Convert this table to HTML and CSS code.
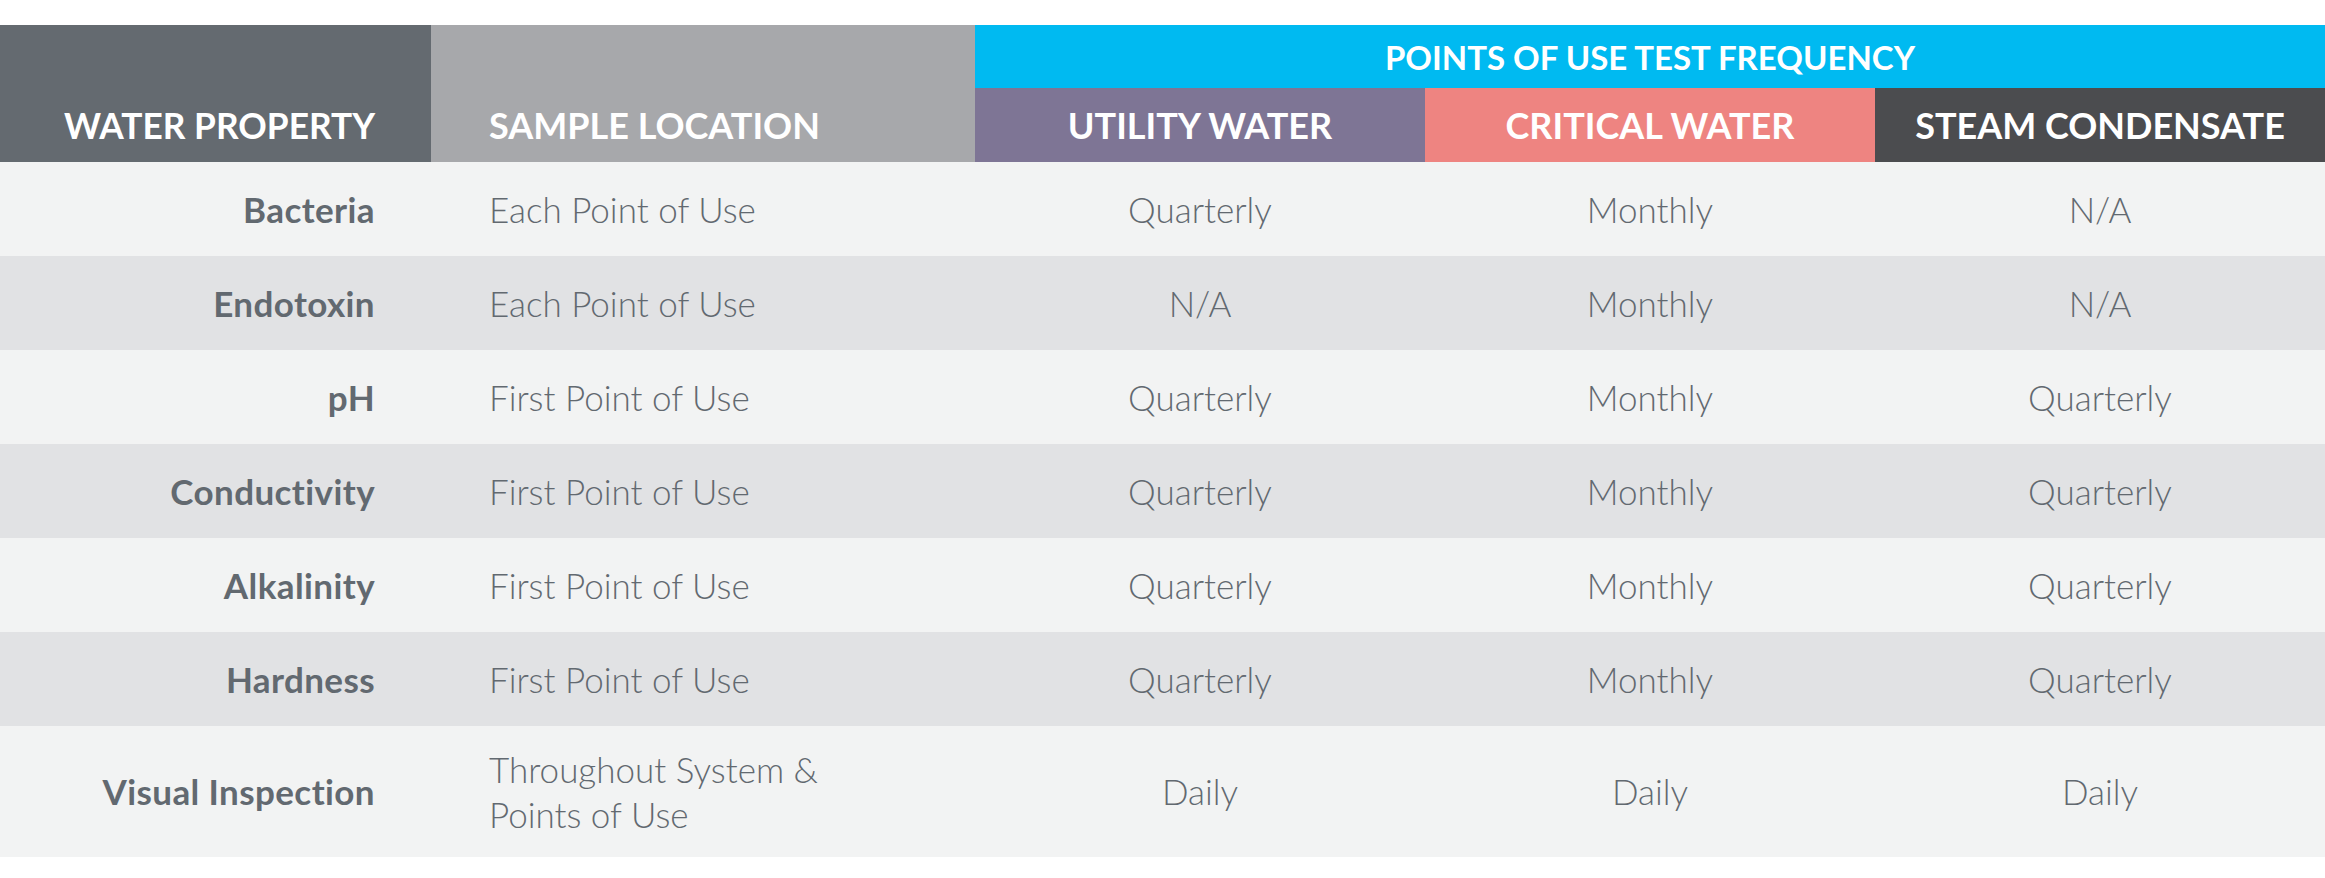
FILE: index.html
```html
<!DOCTYPE html>
<html lang="en">
<head>
<meta charset="utf-8">
<title>Points of Use Test Frequency</title>
<link rel="stylesheet" href="styles.css">
</head>
<body>
<div class="table">
  <div class="hcell h-prop"><span>WATER PROPERTY</span></div>
  <div class="hcell h-loc"><span>SAMPLE LOCATION</span></div>
  <div class="hcell h-group">POINTS OF USE TEST FREQUENCY</div>
  <div class="hcell h-sub h-util">UTILITY WATER</div>
  <div class="hcell h-sub h-crit">CRITICAL WATER</div>
  <div class="hcell h-sub h-steam">STEAM CONDENSATE</div>

  <div class="row odd"><div class="c prop">Bacteria</div><div class="c loc">Each Point of Use</div><div class="c f">Quarterly</div><div class="c f">Monthly</div><div class="c f">N/A</div></div>
  <div class="row even"><div class="c prop">Endotoxin</div><div class="c loc">Each Point of Use</div><div class="c f">N/A</div><div class="c f">Monthly</div><div class="c f">N/A</div></div>
  <div class="row odd"><div class="c prop">pH</div><div class="c loc">First Point of Use</div><div class="c f">Quarterly</div><div class="c f">Monthly</div><div class="c f">Quarterly</div></div>
  <div class="row even"><div class="c prop">Conductivity</div><div class="c loc">First Point of Use</div><div class="c f">Quarterly</div><div class="c f">Monthly</div><div class="c f">Quarterly</div></div>
  <div class="row odd"><div class="c prop">Alkalinity</div><div class="c loc">First Point of Use</div><div class="c f">Quarterly</div><div class="c f">Monthly</div><div class="c f">Quarterly</div></div>
  <div class="row even"><div class="c prop">Hardness</div><div class="c loc">First Point of Use</div><div class="c f">Quarterly</div><div class="c f">Monthly</div><div class="c f">Quarterly</div></div>
  <div class="row odd"><div class="c prop">Visual Inspection</div><div class="c loc">Throughout System &amp;<br>Points of Use</div><div class="c f">Daily</div><div class="c f">Daily</div><div class="c f">Daily</div></div>
</div>
</body>
</html>
```
FILE: styles.css
```css
html, body {
  margin: 0;
  padding: 0;
  background: #ffffff;
}
body {
  padding-top: 25px;
  font-family: "Lato", "Liberation Sans", sans-serif;
  color: #626970;
}
.table {
  display: grid;
  grid-template-columns: 431px 544px 450px 450px 450px;
  grid-template-rows: 63px 74px repeat(6, 94px) 131px;
}
.hcell {
  color: #ffffff;
  font-weight: 700;
  font-size: 36px;
  display: flex;
  align-items: center;
}
.h-prop {
  grid-row: 1 / 3;
  grid-column: 1;
  background: #646a70;
  justify-content: flex-end;
  padding-right: 56px;
  align-items: flex-end;
  font-size: 35.3px;
}
.h-loc {
  grid-row: 1 / 3;
  grid-column: 2;
  background: #a7a8ab;
  padding-left: 58px;
  align-items: flex-end;
}
.h-prop span, .h-loc span {
  height: 74px;
  display: flex;
  align-items: center;
}
.h-group {
  grid-column: 3 / 6;
  grid-row: 1;
  background: #00baf1;
  justify-content: center;
  font-size: 33px;
}
.h-sub {
  grid-row: 2;
  justify-content: center;
}
.h-util { background: #7e7595; }
.h-crit { background: #ee8481; }
.h-steam { background: #4b4c4f; }

.row {
  display: contents;
}
.c {
  display: flex;
  align-items: center;
  font-size: 35px;
  font-weight: 300;
  line-height: 45px;
}
.odd .c { background: #f2f3f3; }
.even .c { background: #e1e2e4; }
.prop {
  justify-content: flex-end;
  padding-right: 56px;
  font-weight: 700;
  letter-spacing: 0.4px;
}
.loc {
  padding-left: 58px;
}
.f {
  justify-content: center;
}
```
